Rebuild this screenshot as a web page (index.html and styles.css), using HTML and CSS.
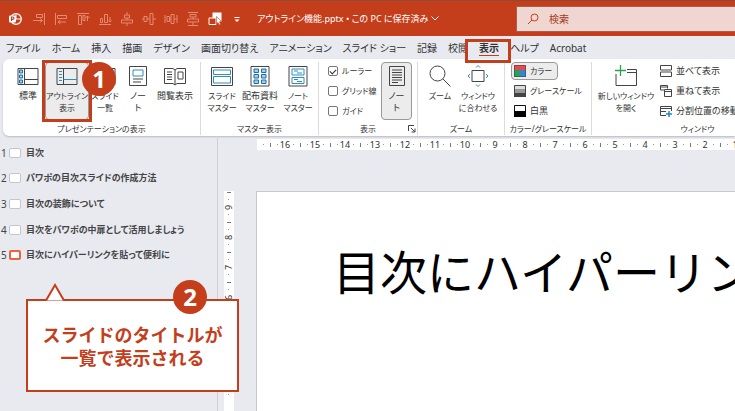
FILE: index.html
```html
<!DOCTYPE html>
<html lang="ja">
<head>
<meta charset="utf-8">
<title>アウトライン機能.pptx</title>
<link rel="stylesheet" href="styles.css">
</head>
<body>
<header class="titlebar">
  <div class="quick">
    <svg class="logo" viewBox="0 0 14 14"><circle cx="8" cy="7" r="5.3" fill="none" stroke="#fff" stroke-width="1.3"/><path d="M8 2v5h5" fill="none" stroke="#fff"/><rect x="1" y="3.5" width="7" height="7" rx="1" fill="#fff"/><path d="M3.5 9V5h1.3a1.2 1.2 0 0 1 0 2.4H3.5" fill="none" stroke="#c43e1c" stroke-width="1.1"/></svg>
    <button class="qbtn" aria-label="右揃え"><svg viewBox="0 0 14 14"><path d="M12.5 1v12M4.5 2.500h6v3h-6zM1 8.500h9.500M8 6.500l2.500 2-2.500 2"/></svg></button>
    <button class="qbtn" aria-label="左揃え"><svg viewBox="0 0 14 14"><path d="M1.500 1v12M3.500 3.500h9v3h-9zM12 10H4M6.500 8L4 10l2.500 2"/></svg></button>
    <button class="qbtn" aria-label="上揃え"><svg viewBox="0 0 14 14"><path d="M1 1.500h12M2.500 3.500h3v9h-3zM7 3.500h2v5H7zM11.500 9V4M9.500 6l2-2 2 2"/></svg></button>
    <button class="qbtn" aria-label="下揃え"><svg viewBox="0 0 14 14"><path d="M1 12.500h12M2.500 6.500h2v4h-2zM6.500 2.500h3v8h-3zM12 5v5M10.500 8.500L12 10l1.500-1.500"/></svg></button>
    <button class="qbtn" aria-label="左右中央揃え"><svg viewBox="0 0 14 14"><path d="M7 0v3M7 6v2M7 11v3M4.500 3h5v3h-5zM1.500 8h11v3h-11z"/></svg></button>
    <button class="qbtn" aria-label="上下中央揃え"><svg viewBox="0 0 14 14"><path d="M0 7h2M5 7h3M11 7h3M2 4.500h3v5H2zM8 1.500h3v11H8z"/></svg></button>
    <button class="qbtn" aria-label="左右に整列"><svg viewBox="0 0 14 14"><path d="M1 3v8M13 3v8M3 4.500h2.500v5H3zM7 2.500h3v9H7zM5.500 7H7M10 7h3"/></svg></button>
    <button class="qbtn" aria-label="上下に整列"><svg viewBox="0 0 14 14"><path d="M2 .500h10M2 13.500h10M4 2.500h6v2.500H4zM1.500 7h11v3h-11zM7 5v2M7 10v3"/></svg></button>
    <button class="qbtn qbtn-on" aria-label="オブジェクトの選択"><svg viewBox="0 0 14 14"><rect x="5" y="1" width="8" height="8" fill="#fff"/><path d="M1 6h7v6.500H1z" fill="#c43e1c"/><path d="M8.500 4.500l5 5-2 .3 1 2.500-1.500.6-1-2.400-1.500 1.300z" fill="#fff" stroke="#c43e1c" stroke-width=".6"/></svg></button>
    <button class="qbtn qbtn-on" aria-label="クイック アクセスのカスタマイズ"><svg viewBox="0 0 14 14"><path d="M4.500 5.500h5"/><path d="M4.500 7.500h5L7 10z" fill="#fff" stroke="none"/></svg></button>
  </div>
  <button class="docname">アウトライン機能.pptx • この PC に保存済み <svg viewBox="0 0 8 5"><path d="M.5.5L4 4 7.500.500"/></svg></button>
  <label class="search"><svg viewBox="0 0 12 12"><circle cx="7.500" cy="4.500" r="3.500"/><path d="M5 7L1 11"/></svg><input type="text" placeholder="検索" aria-label="検索"></label>
</header>

<nav class="tabs">
  <a href="#">ファイル</a><a href="#">ホーム</a><a href="#">挿入</a><a href="#">描画</a><a href="#">デザイン</a><a href="#">画面切り替え</a><a href="#">アニメーション</a><a href="#">スライド ショー</a><a href="#">記録</a><a href="#">校閲</a><a href="#" class="current">表示</a><a href="#">ヘルプ</a><a href="#">Acrobat</a>
</nav>

<section class="ribbon">
  <div class="group">
    <div class="tools views">
      <button class="tool"><svg viewBox="0 0 22 22"><path class="k" d="M1 3.500h20v16H1zM7.500 3.500v16M7.500 14.500H21"/><path class="bf" d="M2.500 5h3v3h-3zM2.500 10h3v3h-3zM2.500 15h3v3h-3z"/></svg><span>標準</span></button>
      <button class="tool pressed marked"><svg viewBox="0 0 22 22"><path class="k" d="M1 3.500h20v16H1zM7.500 3.500v16"/><path class="b" d="M7.500 14.500H21M3 6.500h3M3 9.500h3M3 12.500h3M3 15.500h3"/></svg><span class="small">アウトライン<br>表示</span><span class="badge badge-one">1</span></button>
      <button class="tool"><svg viewBox="0 0 22 22"><path class="k" d="M1 3.500h20v16H1z"/><path class="b" d="M4 6h6v4H4zM12 6h6v4h-6zM4 13h6v4H4zM12 13h6v4h-6z"/></svg><span class="small">スライド<br>一覧</span></button>
      <button class="tool"><svg viewBox="0 0 22 22"><path class="k" d="M2.500 1.500h17v19h-17zM6 14h10M6 17h8"/><path class="b" d="M6 5h10v6H6z"/></svg><span>ノー<br>ト</span></button>
      <button class="tool"><svg viewBox="0 0 22 22"><path class="k" d="M.5 3.500H9l2 1.500 2-1.500h8.500v15H13L11 20l-2-1.500H.5zM11 5v15M3 7h5M3 9.500h5M3 12h5M3 14.500h5M14 7h5v7h-5z"/></svg><span>閲覧表示</span></button>
    </div>
    <h2>プレゼンテーションの表示</h2>
  </div>
  <div class="group">
    <div class="tools masters">
      <button class="tool"><svg viewBox="0 0 22 22"><path class="k" d="M.5 2.500h21v18H.5z"/><path class="b" d="M2.500 5h17v4.500h-17zM2.500 11.500h17V18h-17z"/></svg><span class="small">スライド<br>マスター</span></button>
      <button class="tool"><svg viewBox="0 0 22 22"><path class="k" d="M2 1.500h18v19.500H2z"/><path class="bf" d="M5 4h4.500v3.500H5zM12.500 4H17v3.500h-4.500zM5 9.500h4.500V13H5zM12.500 9.500H17V13h-4.500zM5 15h4.500v3.500H5zM12.500 15H17v3.500h-4.500z"/></svg><span>配布資料<br><small>マスター</small></span></button>
      <button class="tool"><svg viewBox="0 0 22 22"><path class="k" d="M2 1.500h18v19.500H2z"/><path class="b" d="M5 4h12v6H5zM5 12.500h12v6H5zM7 6h4M10 8h5M7 14.500h4M10 16.500h5"/></svg><span class="small">ノート<br>マスター</span></button>
    </div>
    <h2>マスター表示</h2>
  </div>
  <div class="group">
    <div class="tools shows">
      <div class="checks">
        <label><input type="checkbox" checked>ルーラー</label>
        <label><input type="checkbox">グリッド線</label>
        <label><input type="checkbox">ガイド</label>
      </div>
      <button class="tool pressed"><svg viewBox="0 0 22 22"><path class="k" d="M3.500 1.500h15v19h-15zM6 5h10M6 7.500h10M6 10h10M6 12.500h10M6 15h10M6 17.500h6"/></svg><span>ノー<br>ト</span></button>
    </div>
    <h2>表示</h2>
    <button class="launcher" aria-label="グリッドとガイド"><svg viewBox="0 0 8 8"><path d="M.5 6V.5H6M3 3l4 4M7 3.500V7H3.500"/></svg></button>
  </div>
  <div class="group">
    <div class="tools zooms">
      <button class="tool"><svg viewBox="0 0 22 22"><circle class="k" cx="8.500" cy="8.500" r="7.500"/><path class="k" d="M14 14l7.500 7.500"/></svg><span class="small">ズーム</span></button>
      <button class="tool"><svg viewBox="0 0 22 22"><path class="k" d="M5 5.500h12v11H5z"/><path class="b" d="M9 2.500l2-2 2 2M9 19.500l2 2 2-2M3 9l-2 2 2 2M19 9l2 2-2 2"/></svg><span class="small">ウィンドウ<br>に合わせる</span></button>
    </div>
    <h2>ズーム</h2>
  </div>
  <div class="group">
    <div class="tools rows colors">
      <button class="row small pressed"><svg viewBox="0 0 12 12"><path fill="#e8494b" d="M0 0h12v6H0z"/><path fill="#23a45a" d="M0 5h7v7H0z"/><path fill="#3384d4" d="M6 5h6v7H6z"/><path class="k" d="M.5.5h11v11H.5z" opacity=".6"/></svg>カラー</button>
      <button class="row small"><svg viewBox="0 0 12 12"><path fill="#ddd" d="M0 0h12v4H0z"/><path fill="#999" d="M0 4h12v4H0z"/><path fill="#444" d="M0 8h12v4H0z"/><path class="k" d="M.5.5h11v11H.5z"/></svg>グレースケール</button>
      <button class="row"><svg viewBox="0 0 12 12"><path fill="#fff" stroke="#111" d="M.5.5h11v11H.5z"/><path fill="#000" d="M0 6h12v6H0z"/></svg>白黒</button>
    </div>
    <h2>カラー/グレースケール</h2>
  </div>
  <div class="group">
    <div class="tools windows">
      <button class="tool"><svg viewBox="0 0 22 22"><path class="k" d="M1 9v11.500h20.500v-16H12M12 7.500h9.500"/><path d="M5.500 0v11M0 5.500h11" fill="none" stroke="#2ba04d" stroke-width="1.300"/></svg><span class="small">新しいウィンドウ<br>を開く</span></button>
      <div class="rows">
        <button class="row"><svg viewBox="0 0 12 12"><path class="k" d="M.5.500h11v4.500H.5zM.5 7h11v4.500H.5z"/></svg>並べて表示</button>
        <button class="row"><svg viewBox="0 0 12 12"><path class="k" d="M4 5H.5V.5h7v3M4.500 4.500h7v7h-7zM4.500 6.500h7M.5 2h7"/></svg>重ねて表示</button>
        <button class="row"><svg viewBox="0 0 12 12"><path class="k" d="M6 10.500H.5v-9h11V6M.5 3.500h11M.5 6.500H6"/><path d="M9 6v6M6 9h6" fill="none" stroke="#1e88c8" stroke-width="1.500"/></svg>分割位置の移動</button>
      </div>
    </div>
    <h2 class="window-title">ウィンドウ</h2>
  </div>
</section>

<main class="workspace">
  <aside class="outline">
    <ol>
      <li><span class="num">1</span><i></i>目次</li>
      <li><span class="num">2</span><i></i>パワポの目次スライドの作成方法</li>
      <li><span class="num">3</span><i></i>目次の装飾について</li>
      <li><span class="num">4</span><i></i>目次をパワポの中扉として活用しましょう</li>
      <li class="active"><span class="num">5</span><i></i>目次にハイパーリンクを貼って便利に</li>
    </ol>
    <div class="callout">
      <svg class="pointer" viewBox="0 0 20 18"><path d="M1 17.500L10 2l9 15.500" fill="#fff" stroke="#c43e1c" stroke-width="2"/></svg>
      <span class="badge badge-two">2</span>
      スライドのタイトルが<br>一覧で表示される
    </div>
  </aside>
  <div class="editor">
    <div class="hruler"><span class="lead"></span><span>16</span><span>15</span><span>14</span><span>13</span><span>12</span><span>11</span><span>10</span><span>9</span><span>8</span><span>7</span><span>6</span><span>5</span><span>4</span><span>3</span><span>2</span><span>1</span></div>
    <div class="vruler"><span>9</span><span>8</span><span>7</span><span>6</span><span>5</span><span>4</span><span>3</span></div>
    <article class="slide"><h1>目次にハイパーリンク</h1></article>
  </div>
</main>
</body>
</html>
```
FILE: styles.css
```css
:root {
  --accent: #c43e1c;
  --ink: #333;
  --shell: #e8eaf0;
}
* { box-sizing: border-box; }
body {
  margin: 0;
  height: 100vh;
  display: flex;
  flex-direction: column;
  overflow: hidden;
  background: var(--shell);
  color: var(--ink);
  font: 10px/12px "Noto Sans", "Noto Sans CJK JP", sans-serif;
  font-feature-settings: "palt";
}
button, input {
  font: inherit;
  font-feature-settings: inherit;
  color: inherit;
  border: 0;
  padding: 0;
  margin: 0;
  background: none;
}
svg { display: block; flex: none; }
h1, h2, ol { margin: 0; padding: 0; font-weight: 400; }
small, .small { font-size: 8px; }
.k { fill: none; stroke: #444; }
.b { fill: none; stroke: #2c8fc0; }
.bf { fill: #9fd0f0; stroke: #1d6fa8; }

/* title bar */
.titlebar {
  flex: none;
  display: grid;
  grid-template-columns: 257px 259px 1fr;
  align-items: center;
  height: 36px;
  background: var(--accent);
  border-top: 1px solid #8e4a38;
  color: #fff;
}
.quick { display: flex; gap: 8px; padding-left: 8px; }
.quick svg { width: 14px; height: 14px; }
.logo { margin-right: 2px; }
.qbtn svg { fill: none; stroke: #e58a70; }
.qbtn-on svg { stroke: #fff; }
.docname { display: flex; align-items: center; gap: 3px; font-size: 9px; white-space: nowrap; }
.docname svg { width: 8px; height: 5px; fill: none; stroke: #fff; }
.search {
  display: flex;
  align-items: center;
  gap: 10px;
  height: 26px;
  padding-left: 10px;
  background: #f0d6d0;
  border: 1px solid #a8604e;
  border-right: 0;
  color: var(--accent);
}
.search svg { width: 12px; height: 12px; fill: none; stroke: var(--accent); }
.search input { flex: 1; min-width: 0; outline: 0; }
.search input::placeholder { color: #a83a20; opacity: 1; }

/* tabs */
.tabs { flex: none; display: flex; gap: 11px; height: 23px; padding: 6px 6px 0; white-space: nowrap; }
.tabs a { color: var(--ink); text-decoration: none; }
.current { position: relative; z-index: 2; height: 14px; font-weight: 700; border-bottom: 1px solid var(--accent); }
.current::after { content: ""; position: absolute; inset: -3px -12px -8px -14px; border: 3px solid var(--accent); }

/* ribbon */
.ribbon {
  flex: none;
  display: grid;
  grid-template-columns: 198px 118px 99px 87px 87px 1fr;
  height: 77px;
  margin-left: 3px;
  padding: 3px 0 1px;
  background: #fff;
  border-radius: 6px 0 0 6px;
  box-shadow: 0 1px 2px #b8bac2;
  font-size: 9px;
}
.group { position: relative; display: flex; flex-direction: column; justify-content: space-between; min-width: 0; border-right: 1px solid #dcdcdc; white-space: nowrap; }
.group:last-child { border: 0; }
.group h2 { font-size: 8px; text-align: center; }
.tools { display: grid; height: 58px; }
.views { grid-template-columns: 34px 44px 32px 34px 40px; padding-left: 8px; }
.masters { grid-template-columns: repeat(3, 38px); padding-left: 2px; }
.shows { grid-template-columns: 53px 31px; padding-left: 9px; }
.zooms { grid-template-columns: 36px 40px; padding-left: 4px; }
.windows { grid-template-columns: 68px 1fr; }
.tool { position: relative; display: flex; flex-direction: column; align-items: center; justify-content: flex-start; padding-top: 3px; text-align: center; }
.tool svg { width: 22px; height: 22px; margin-bottom: 3px; }
.pressed { background: #ececec; border: 1px solid #999; border-radius: 4px; }
.tool.pressed { padding-top: 2px; }
.marked::before { content: ""; position: absolute; inset: -3px -4px; border: 3px solid var(--accent); }
.checks, .rows { display: flex; flex-direction: column; gap: 2px; }
.checks label { display: flex; align-items: center; gap: 4px; height: 18px; font-size: 8px; }
.checks input { appearance: none; flex: none; width: 10px; height: 10px; border: 1px solid #777; border-radius: 2px; }
.checks input:checked::before { content: ""; display: block; width: 5px; height: 3px; margin: 2px 0 0 1px; border: solid #333; border-width: 0 0 1px 1px; transform: rotate(-45deg); }
.row { display: flex; align-items: center; gap: 4px; height: 18px; padding: 0 3px; align-self: flex-start; }
.row svg { width: 12px; height: 12px; }
.row.pressed { padding: 0 5px 0 2px; }
.colors { padding-left: 6px; }
.windows .row { padding: 0; }
.window-title { padding-left: 68px; }
.launcher { position: absolute; right: 1px; bottom: 2px; }
.launcher svg { width: 8px; height: 8px; fill: none; stroke: #444; }

/* workspace */
.workspace { flex: 1; min-height: 0; display: grid; grid-template-columns: 218px 1fr; }
.outline { position: relative; z-index: 1; padding-top: 4px; border-right: 1px solid #cfd1d6; }
.outline ol { display: grid; grid-template-rows: repeat(5, 1fr); height: 128px; list-style: none; }
.outline li { display: flex; align-items: center; font-size: 9px; font-weight: 700; color: #444; white-space: nowrap; }
.num { width: 9px; padding-left: 1px; font-size: 10px; font-weight: 400; }
.outline i { width: 12px; height: 10px; margin-right: 5px; border: 1px solid #c4c6cc; border-radius: 2px; background: #fff; }
.outline .active i { border: 2px solid #f0603c; }
.editor { display: grid; grid-template-columns: 38px 1fr; grid-template-rows: 55px 1fr; min-width: 0; min-height: 0; }
.hruler { grid-column: 2; display: flex; height: 11px; margin: 3px 0 0 1px; background: #fff; overflow: hidden; font-size: 9px; line-height: 11px; }
.hruler span {
  flex: none;
  width: 30px;
  text-align: center;
  background:
    linear-gradient(#777, #777) 0 4px / 1px 4px no-repeat,
    linear-gradient(#999, #999) 7px 5px / 1px 1px no-repeat,
    linear-gradient(#999, #999) 23px 5px / 1px 1px no-repeat;
}
.hruler .lead { width: 13px; background: linear-gradient(#999, #999) 6px 5px / 1px 1px no-repeat; }
.vruler { width: 10px; margin-left: 6px; padding-top: 1px; background: #fff; overflow: hidden; font-size: 9px; }
.vruler span {
  display: block;
  width: 10px;
  height: 30px;
  writing-mode: vertical-rl;
  transform: rotate(180deg);
  line-height: 10px;
  text-align: center;
  background:
    linear-gradient(#777, #777) 3px 100% / 4px 1px no-repeat,
    linear-gradient(#999, #999) 5px 7px / 1px 1px no-repeat,
    linear-gradient(#999, #999) 5px 22px / 1px 1px no-repeat;
}
.slide { min-width: 0; overflow: hidden; padding: 52px 0 0 76px; background: #fff; border: solid #c8c8c8; border-width: 1px 0 0 1px; }
.slide h1 { color: #000; font-size: 47px; line-height: 56px; white-space: nowrap; font-feature-settings: normal; }

/* annotations */
.badge { position: absolute; z-index: 3; width: 34px; height: 34px; border-radius: 50%; background: var(--accent); color: #fff; font: 700 24px/34px "Noto Sans", sans-serif; text-align: center; }
.badge-one { left: 36px; top: -1px; }
.badge-two { left: 145px; top: -21px; }
.callout {
  position: absolute;
  left: 26px;
  top: 163px;
  width: 213px;
  height: 93px;
  padding-top: 23px;
  border: 2px solid var(--accent);
  background: #fff;
  color: var(--accent);
  font-size: 18px;
  line-height: 23px;
  font-weight: 700;
  font-feature-settings: normal;
  text-align: center;
}
.pointer { position: absolute; left: 17px; top: -18px; width: 20px; height: 18px; }
```
